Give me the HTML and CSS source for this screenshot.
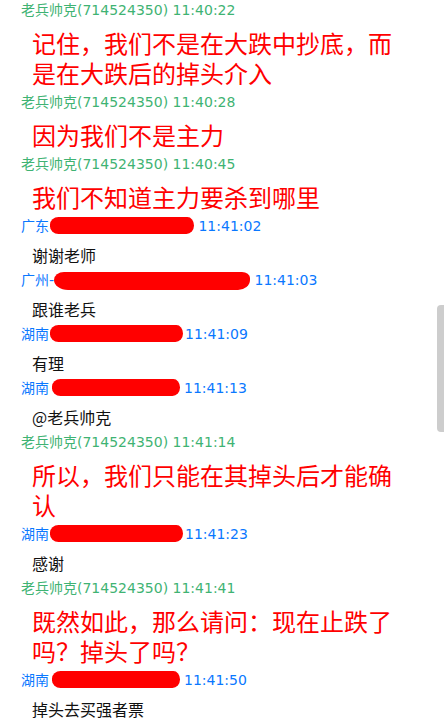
FILE: index.html
```html
<!DOCTYPE html>
<html lang="zh-CN">
<head>
<meta charset="utf-8">
<title>聊天记录</title>
<link rel="stylesheet" href="styles.css">
</head>
<body>
<div class="chat">
  <div class="hdr green">老兵帅克(714524350) 11:40:22</div>
  <div class="msg red">记住，我们不是在大跌中抄底，而是在大跌后的掉头介入</div>

  <div class="hdr green">老兵帅克(714524350) 11:40:28</div>
  <div class="msg red">因为我们不是主力</div>

  <div class="hdr green">老兵帅克(714524350) 11:40:45</div>
  <div class="msg red">我们不知道主力要杀到哪里</div>

  <div class="hdr blue">广东<span class="blob blob-gd"></span> 11:41:02</div>
  <div class="msg black">谢谢老师</div>

  <div class="hdr blue">广州-<span class="blob blob-gz"></span> 11:41:03</div>
  <div class="msg black">跟谁老兵</div>

  <div class="hdr blue">湖南<span class="blob blob-hn"></span>11:41:09</div>
  <div class="msg black">有理</div>

  <div class="hdr blue">湖南<span class="blob blob-hn2"></span>11:41:13</div>
  <div class="msg black">@老兵帅克</div>

  <div class="hdr green">老兵帅克(714524350) 11:41:14</div>
  <div class="msg red">所以，我们只能在其掉头后才能确认</div>

  <div class="hdr blue">湖南<span class="blob blob-hn"></span>11:41:23</div>
  <div class="msg black">感谢</div>

  <div class="hdr green">老兵帅克(714524350) 11:41:41</div>
  <div class="msg red">既然如此，那么请问：现在止跌了吗？掉头了吗？</div>

  <div class="hdr blue">湖南<span class="blob blob-hn2"></span>11:41:50</div>
  <div class="msg black">掉头去买强者票</div>
</div>
<div class="thumb"></div>
</body>
</html>
```

FILE: styles.css
```css
html, body {
  margin: 0;
  padding: 0;
  background: #ffffff;
  overflow: hidden;
}

.chat {
  display: flex;
  flex-direction: column;
}

.hdr {
  font-family: "DejaVu Sans", "Noto Sans CJK SC", sans-serif;
  font-size: 14px;
  line-height: 20px;
  height: 20px;
  padding-left: 21px;
  white-space: nowrap;
}

.green { color: #3fb373; }
.blue { color: #0a78ff; }

.msg {
  font-family: "Noto Sans CJK SC", sans-serif;
  padding-left: 32px;
  width: 372px;
}

.msg.red {
  color: #ff0000;
  font-size: 24px;
  line-height: 30px;
  padding-top: 8px;
  padding-bottom: 4px;
}

.msg.black {
  color: #111111;
  font-size: 16px;
  line-height: 24px;
  padding-top: 7px;
  padding-bottom: 3px;
}

.blob {
  display: inline-block;
  height: 17px;
  background: #ff0000;
  vertical-align: -3px;
  border-radius: 9px 7px 8px 9px / 8px 9px 9px 8px;
}

.blob-gd { width: 144px; margin-left: 1px; }
.blob-gz { width: 196px; height: 18px; vertical-align: -5px; border-radius: 10px 8px 12px 14px / 8px 6px 10px 10px; }
.blob-hn { width: 133px; margin-left: 1px; margin-right: 2px; }
.blob-hn2 { width: 128px; margin-left: 3px; margin-right: 4px; }

.thumb {
  position: fixed;
  right: 0;
  top: 305px;
  width: 7px;
  height: 127px;
  background: #cdcdcd;
  border-radius: 4px 0 0 4px;
}
```
